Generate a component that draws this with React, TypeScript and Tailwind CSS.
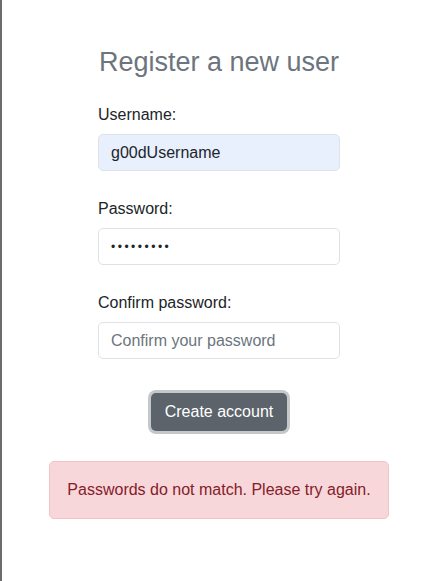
import { useState } from 'react';

// Register form with a validation error shown under the button
export default function App() {
  const [username, setUsername] = useState('g00dUsername');
  const [password, setPassword] = useState('password1');
  const [confirm, setConfirm] = useState('');

  return (
    <div
      className="min-h-[581px] border-l-2 border-[#6c6c6c] bg-white text-[#212529]"
      style={{ fontFamily: '"Liberation Sans", Arial, sans-serif' }}
    >
      <div className="flex flex-col items-center pt-[45px]">
        <h2 className="text-[27px] leading-[34px] font-normal text-[#6c757d]">
          Register a new user
        </h2>

        <form className="mt-[24px] w-[242px]" onSubmit={(e) => e.preventDefault()}>
          <label className="block text-base leading-6 mb-[7px]">Username:</label>
          <input
            value={username}
            onChange={(e) => setUsername(e.target.value)}
            className="block w-full h-[37px] px-3 rounded-[5px] border border-[#dee2e6] bg-[#e8f0fe] text-base outline-none"
          />

          <label className="block text-base leading-6 mt-[26px] mb-[7px]">Password:</label>
          <input
            type="password"
            value={password}
            onChange={(e) => setPassword(e.target.value)}
            className="block w-full h-[37px] px-3 rounded-[5px] border border-[#dee2e6] bg-white text-[12px] outline-none tracking-[2.5px]"
          />

          <label className="block text-base leading-6 mt-[26px] mb-[7px]">Confirm password:</label>
          <input
            type="password"
            value={confirm}
            onChange={(e) => setConfirm(e.target.value)}
            placeholder="Confirm your password"
            className="block w-full h-[37px] px-3 rounded-[5px] border border-[#dee2e6] bg-white text-base outline-none placeholder:text-[#6c757d]"
          />

          <div className="flex justify-center mt-[34px]">
            <button
              type="submit"
              className="h-[38px] px-[14px] rounded-[5px] bg-[#5c636a] text-white text-base ring-[3px] ring-[#c4c8cb]"
            >
              Create account
            </button>
          </div>
        </form>

        <div className="mt-[30px] w-[340px] rounded-[5px] border border-[#f5c2c7] bg-[#f8d7da] py-4 text-center text-base leading-6 text-[#842029]">
          Passwords do not match. Please try again.
        </div>
      </div>
    </div>
  );
}
